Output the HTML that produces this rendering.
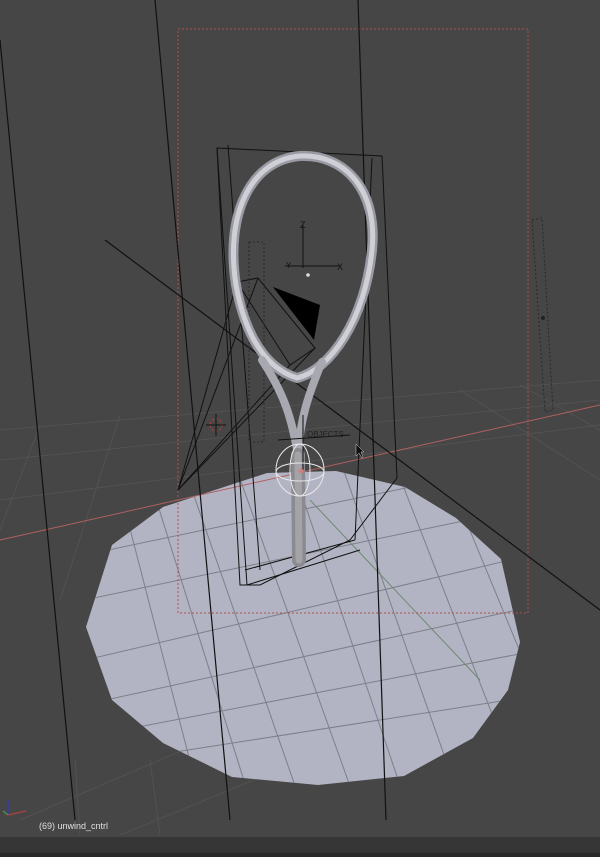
<!DOCTYPE html>
<html><head><meta charset="utf-8"><style>
html,body{margin:0;padding:0;background:#464646;}
svg{display:block}
</style></head><body>
<svg width="600" height="857" viewBox="0 0 600 857" xmlns="http://www.w3.org/2000/svg">
<defs><clipPath id="d"><polygon points="86,627 112,545 163,507 267,473 336,471 405,487 456,518 501,559 520,642 508,690 473,738 404,776 318,785 232,777 163,743 112,700"/></clipPath></defs>
<rect width="600" height="857" fill="#464646"/>
<g stroke="#525252" stroke-width="1" fill="none">
<line x1="0" y1="430" x2="600" y2="380"/>
<line x1="0" y1="460" x2="600" y2="400"/>
<line x1="0" y1="500" x2="600" y2="425"/>
<line x1="40" y1="425" x2="0" y2="530"/>
<line x1="120" y1="415" x2="60" y2="600"/>
<line x1="460" y1="390" x2="600" y2="480"/>
<line x1="520" y1="385" x2="600" y2="430"/>
<line x1="20" y1="820" x2="300" y2="700"/>
<line x1="120" y1="835" x2="400" y2="720"/>
<line x1="75" y1="760" x2="80" y2="835"/>
<line x1="150" y1="760" x2="160" y2="835"/>
</g>
<polygon points="86,627 112,545 163,507 267,473 336,471 405,487 456,518 501,559 520,642 508,690 473,738 404,776 318,785 232,777 163,743 112,700" fill="#b2b4c4"/>
<g stroke="#74767f" stroke-width="1" fill="none" opacity="0.85" clip-path="url(#d)">
<line x1="60" y1="605" x2="540" y2="505"/>
<line x1="60" y1="666" x2="540" y2="553"/>
<line x1="60" y1="710" x2="540" y2="605"/>
<line x1="60" y1="742" x2="540" y2="650"/>
<line x1="60" y1="770" x2="540" y2="695"/>
<line x1="60" y1="560" x2="540" y2="460"/>
<line x1="120" y1="490" x2="200" y2="800"/>
<line x1="150" y1="480" x2="250" y2="800"/>
<line x1="185" y1="470" x2="300" y2="800"/>
<line x1="235" y1="465" x2="355" y2="800"/>
<line x1="290" y1="460" x2="405" y2="800"/>
<line x1="340" y1="460" x2="460" y2="800"/>
<line x1="395" y1="465" x2="510" y2="760"/>
<line x1="445" y1="470" x2="540" y2="700"/>
</g>
<line x1="310" y1="500" x2="480" y2="680" stroke="#6f8a6f" stroke-width="1" clip-path="url(#d)"/>
<line x1="0" y1="540" x2="600" y2="405" stroke="#b06060" stroke-width="1"/>
<rect x="178" y="29" width="350" height="584" fill="none" stroke="#b05050" stroke-width="1" stroke-dasharray="2,2"/>
<g stroke="#111" stroke-width="1.2" fill="none">
<line x1="0" y1="40" x2="75" y2="820"/>
<line x1="155" y1="0" x2="230" y2="820"/>
<line x1="358" y1="0" x2="386" y2="820"/>
<line x1="105" y1="240" x2="600" y2="610"/>
</g>
<g stroke="#111" stroke-width="1" fill="none">
<polyline points="178,490 237,282 258,278 315,348 290,365 178,490"/>
<line x1="178" y1="490" x2="315" y2="348"/>
<line x1="178" y1="490" x2="258" y2="278"/>
<line x1="237" y1="282" x2="290" y2="365"/>
</g>
<polygon points="273,287 320,305 314,340" fill="#000"/>
<g stroke="#111" stroke-width="1" fill="none">
<polygon points="217,148 382,156 397,478 350,540 260,585 240,585"/>
<line x1="217" y1="148" x2="247" y2="585"/>
<line x1="228" y1="145" x2="260" y2="570"/>
<line x1="372" y1="158" x2="355" y2="540"/>
<line x1="247" y1="585" x2="360" y2="550"/>
<line x1="245" y1="570" x2="355" y2="540"/>
</g>
<rect x="249" y="242" width="15" height="200" fill="none" stroke="#2a2a2a" stroke-dasharray="2,2"/>
<polygon points="532,220 542,218 553,410 545,412" fill="none" stroke="#2a2a2a" stroke-dasharray="2,2"/>
<circle cx="543" cy="318" r="2" fill="#222"/>
<g fill="none" stroke-linecap="round">
<path d="M300,156 C250,160 225,215 236,285 C245,335 265,368 297,378 C330,370 365,320 372,250 C378,190 345,154 300,156 Z" stroke="#9a9aa4" stroke-width="10"/>
<path d="M300,156 C250,160 225,215 236,285 C245,335 265,368 297,378 C330,370 365,320 372,250 C378,190 345,154 300,156 Z" stroke="#cfcfd6" stroke-width="5"/>
<path d="M262,360 C285,395 292,420 298,455" stroke="#a8a8b0" stroke-width="8"/>
<path d="M322,362 C308,395 300,420 298,455" stroke="#a8a8b0" stroke-width="8"/>
<path d="M298,455 L299,560" stroke="#8a8a90" stroke-width="14"/>
<path d="M298,455 L299,560" stroke="#a4a4a8" stroke-width="7"/>
</g>
<g stroke="#111" stroke-width="1" fill="none">
<line x1="303" y1="225" x2="303" y2="268"/>
<line x1="285" y1="266" x2="340" y2="266"/>
<line x1="278" y1="440" x2="350" y2="435"/>
<line x1="303" y1="415" x2="303" y2="470"/>
</g>
<text x="300" y="228" font-family="Liberation Sans,sans-serif" font-size="9" fill="#111">Z</text>
<text x="337" y="270" font-family="Liberation Sans,sans-serif" font-size="9" fill="#111">X</text>
<text x="286" y="268" font-family="Liberation Sans,sans-serif" font-size="8" fill="#111">Y</text>
<circle cx="308" cy="275" r="1.8" fill="#ddd"/>
<text x="307" y="437" font-family="Liberation Sans,sans-serif" font-size="8" fill="#222">OBJECTS</text>
<g stroke="#e8e8e8" stroke-width="1" fill="none">
<ellipse cx="300" cy="470" rx="24" ry="26"/>
<ellipse cx="300" cy="470" rx="10" ry="26"/>
<ellipse cx="300" cy="472" rx="24" ry="9"/>
</g>
<circle cx="301" cy="471" r="2.5" fill="#d08080"/>
<circle cx="216" cy="425" r="6" fill="none" stroke="#c04040" stroke-dasharray="2,2"/>
<line x1="216" y1="414" x2="216" y2="436" stroke="#111"/>
<line x1="206" y1="425" x2="226" y2="425" stroke="#111"/>
<path d="M356,444 L356,456 L359,453 L362,458 L363,457 L361,452 L364,452 Z" fill="#111" stroke="#ccc" stroke-width="0.5"/>
<line x1="8" y1="815" x2="8" y2="800" stroke="#3a3aaa" stroke-width="1.5"/>
<line x1="8" y1="815" x2="26" y2="811" stroke="#a04040" stroke-width="1.5"/>
<line x1="8" y1="815" x2="3" y2="811" stroke="#4a8a4a" stroke-width="1.5"/>
<text x="39" y="829" font-family="Liberation Sans,sans-serif" font-size="9" fill="#e0e0e0">(69) unwind_cntrl</text>
<rect x="0" y="837" width="600" height="20" fill="#363636"/>
<rect x="0" y="853" width="600" height="4" fill="#2a2a2a"/>
</svg>
</body></html>
